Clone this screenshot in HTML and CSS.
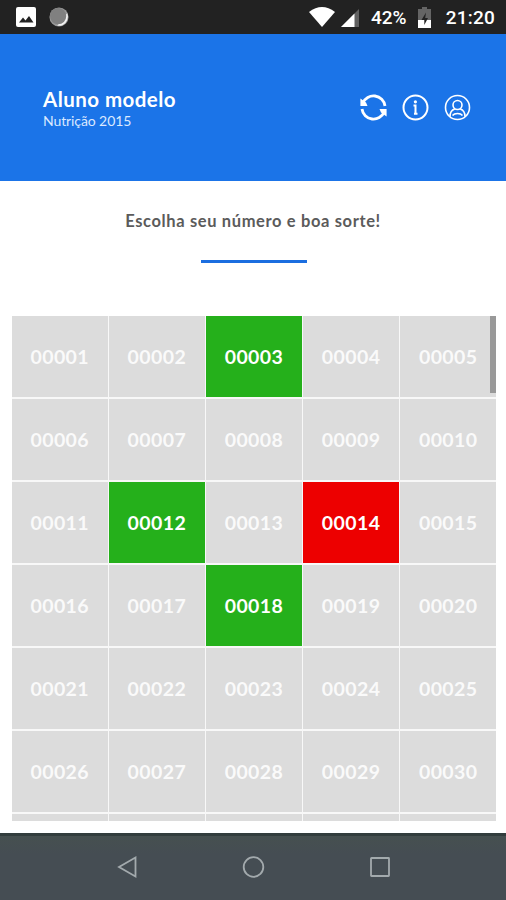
FILE: index.html
```html
<!DOCTYPE html>
<html lang="pt-BR">
<head>
<meta charset="utf-8">
<title>Escolha seu número</title>
<link rel="stylesheet" href="styles.css">
</head>
<body>
<div class="status">
  <svg class="s-pic" width="20" height="20" viewBox="0 0 20 20"><rect width="20" height="20" rx="2" fill="#fff"/><path d="M3 15.500l4-5 2.500 3 3.500-4.500 4.500 6.500z" fill="#222"/></svg>
  <svg class="s-dot" width="20" height="20" viewBox="0 0 22 22"><circle cx="11" cy="11" r="10.500" fill="#999"/><path d="M20 7a10 10 0 0 1-11 13.500z" fill="#f2f2f2"/><circle cx="10" cy="10" r="9" fill="#808080"/></svg>
  <svg class="s-wifi" width="26" height="20" viewBox="0 0 26 20"><path d="M0 5Q13-5 26 5L13 20z" fill="#fff"/></svg>
  <svg class="s-cell" width="18" height="18" viewBox="0 0 18 18"><path d="M18 0V18H0z" fill="#606060"/><path d="M13.500 4.500V18H0z" fill="#fff"/></svg>
  <span class="pct">42%</span>
  <svg class="s-bat" width="13" height="21" viewBox="0 0 13 21"><path d="M4 0h5v2h4v11H0V2h4z" fill="#656565"/><path d="M0 13h13v8H0z" fill="#fff"/><path d="M8 5.500L3.500 13h2.800v5L10 11H7.200z" fill="#222"/></svg>
  <span class="clock">21:20</span>
</div>
<header class="header">
  <div class="student">
    <div class="name">Aluno modelo</div>
    <div class="course">Nutrição 2015</div>
  </div>
  <div class="actions">
    <svg width="27" height="27" viewBox="0 0 27 27" fill="none" stroke="#fff" stroke-width="2.800"><path d="M2.800 9A11.600 11.600 0 0 1 25 12M24.200 18A11.600 11.600 0 0 1 2 15"/><path d="M.4 4.500V12H7.500L6 8.500zM26.600 22.500V15H19.500L21 18.500z" fill="#fff" stroke="none"/></svg>
    <svg width="27" height="27" viewBox="0 0 27 27" fill="none" stroke="#fff"><circle cx="13.500" cy="13.500" r="12" stroke-width="2"/><path d="M11.500 11.500h2v9M12 19.700h3.500" stroke-width="2"/><circle cx="13.400" cy="7.800" r="1.600" fill="#fff" stroke="none"/></svg>
    <svg width="27" height="27" viewBox="0 0 27 27" fill="none" stroke="#fff" stroke-width="1.600"><circle cx="13.500" cy="13.500" r="12"/><circle cx="13.500" cy="11" r="4.500"/><path d="M6 22.700c0-4.500 2-6.900 4.800-7.700M21 22.700c0-4.500-2-6.900-4.800-7.700M8.500 21.500c2-2.600 8-2.600 10 0"/></svg>
  </div>
</header>
<main class="main">
  <h1 class="title">Escolha seu número e boa sorte!</h1>
  <div class="rule"></div>
  <div class="board">
    <div class="grid">
      <div class="cell">00001</div><div class="cell">00002</div><div class="cell green">00003</div><div class="cell">00004</div><div class="cell">00005</div>
      <div class="cell">00006</div><div class="cell">00007</div><div class="cell">00008</div><div class="cell">00009</div><div class="cell">00010</div>
      <div class="cell">00011</div><div class="cell green">00012</div><div class="cell">00013</div><div class="cell red">00014</div><div class="cell">00015</div>
      <div class="cell">00016</div><div class="cell">00017</div><div class="cell green">00018</div><div class="cell">00019</div><div class="cell">00020</div>
      <div class="cell">00021</div><div class="cell">00022</div><div class="cell">00023</div><div class="cell">00024</div><div class="cell">00025</div>
      <div class="cell">00026</div><div class="cell">00027</div><div class="cell">00028</div><div class="cell">00029</div><div class="cell">00030</div>
      <div class="cell"></div><div class="cell"></div><div class="cell"></div><div class="cell"></div><div class="cell"></div>
    </div>
    <div class="thumb"></div>
  </div>
</main>
<nav class="nav">
  <svg width="22" height="24" viewBox="0 0 22 24"><path d="M19.500 2.500V21.500L3 12z"/></svg>
  <svg width="24" height="24" viewBox="0 0 24 24"><circle cx="12.500" cy="12" r="9.800"/></svg>
  <svg width="22" height="22" viewBox="0 0 22 22"><rect x="2" y="2" width="18" height="18" rx=".5"/></svg>
</nav>
</body>
</html>
```
FILE: styles.css
```css
* { box-sizing: border-box; }
body {
  margin: 0;
  width: 506px;
  height: 900px;
  overflow: hidden;
  display: flex;
  flex-direction: column;
  background: #fff;
  font-family: Lato, "Liberation Sans", sans-serif;
}
svg { display: block; flex: none; }
.status {
  height: 34px;
  flex: none;
  display: flex;
  align-items: center;
  padding: 0 11px 0 16px;
  background: #222;
  color: #fff;
  font: 500 19px/34px Roboto, sans-serif;
  white-space: nowrap;
}
.s-dot { margin-left: 13px; }
.s-wifi { margin-left: 240px; }
.s-cell { margin-left: 6px; margin-top: 2px; }
.pct { width: 38px; margin-left: 12px; margin-top: 2px; letter-spacing: -.1px; }
.s-bat { margin-left: 9px; }
.clock { margin-left: auto; margin-top: 2px; letter-spacing: .2px; }
.header {
  height: 147px;
  flex: none;
  display: flex;
  justify-content: space-between;
  align-items: flex-start;
  padding: 53px 35px 0 43px;
  background: #1b74e8;
  color: #fff;
}
.name { font-size: 20.5px; line-height: 25px; font-weight: 700; letter-spacing: .45px; white-space: nowrap; }
.course { font-size: 14px; line-height: 18px; letter-spacing: -.1px; color: #dce9ff; }
.actions { display: flex; gap: 15px; margin-top: 7px; }
.main { height: 652px; flex: none; display: flex; flex-direction: column; align-items: center; padding-top: 30px; }
.title { margin: 0; font-size: 16.5px; line-height: 20px; font-weight: 700; letter-spacing: .63px; color: #5b5b5b; white-space: nowrap; }
.rule { width: 106px; height: 3px; margin: 29px 0 0 1px; background: #1b6ee0; }
.board { position: relative; width: 484px; height: 505px; margin: 53px 0 0 2px; overflow: hidden; }
.grid { display: grid; grid-template-columns: repeat(5, 1fr); grid-auto-rows: 81.400px; gap: 1.600px; background: #f8f8f8; }
.cell {
  display: flex;
  align-items: center;
  justify-content: center;
  background: #dcdcdc;
  color: #fafafa;
  font-size: 19.5px;
  font-weight: 700;
  letter-spacing: .4px;
}
.green { background: #25b01b; color: #fff; }
.red { background: #ed0000; color: #fff; }
.thumb { position: absolute; top: 0; right: 0; width: 6px; height: 77px; background: #999; }
.nav {
  flex: 1;
  display: grid;
  grid-template-columns: repeat(3, 126.500px);
  justify-content: center;
  justify-items: center;
  align-items: center;
  padding-bottom: 3px;
  border-top: 3px solid #323d3d;
  background: linear-gradient(#465050, #454d53 18px);
}
.nav svg { fill: none; stroke: #a3aaad; stroke-width: 1.800; }
```
